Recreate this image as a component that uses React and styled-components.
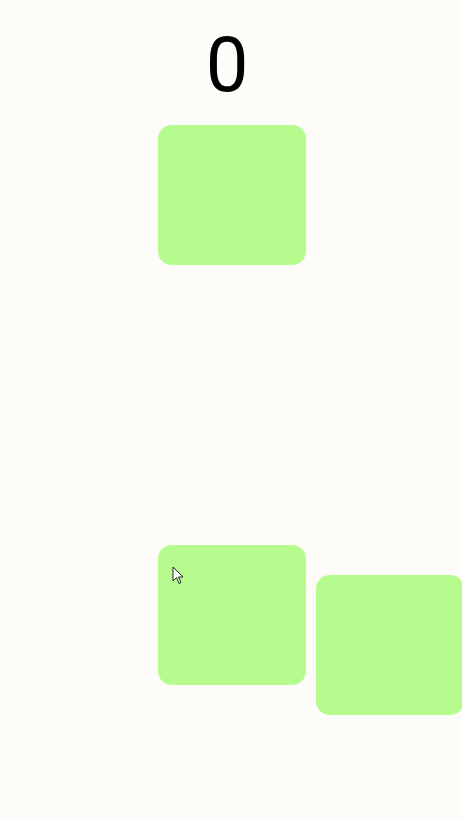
import React from "react";
import styled, { createGlobalStyle } from "styled-components";

const GlobalStyle = createGlobalStyle`
  html, body {
    margin: 0;
    padding: 0;
    background: #fdfcf8;
  }
  body {
    font-family: Roboto, "Liberation Sans", sans-serif;
    overflow: hidden;
  }
`;

const Page = styled.div`
  box-sizing: border-box;
  width: 462px;
  height: 820px;
  padding-left: 2px;
  display: flex;
  flex-direction: column;
  align-items: center;
  overflow: hidden;
`;

const Counter = styled.div`
  margin-top: 22px;
  margin-right: 10px;
  font-size: 76px;
  line-height: 86px;
  color: #000;
`;

const Box = styled.div`
  width: 148px;
  height: 140px;
  border-radius: 14px;
  background: #b5fb8d;
  flex-shrink: 0;
  margin-top: ${(p) => p.$offset || 0}px;
`;

const Row = styled.div`
  display: grid;
  grid-template-columns: 156px 148px 156px;
  width: 460px;
  margin-top: 280px;
`;

const Side = styled.div`
  padding-left: 10px;
  display: flex;
`;

const Cursor = styled.svg`
  position: absolute;
  left: 172px;
  top: 566px;
`;

export default function App() {
  return (
    <>
      <GlobalStyle />
      <Page>
        <Counter>0</Counter>
        <Box $offset={17} />
        <Row>
          <div />
          <Box />
          <Side>
            <Box $offset={30} />
          </Side>
        </Row>
      </Page>
      <Cursor width="13" height="19" viewBox="0 0 13 19">
        <path
          d="M1 1 L1 15 L4.5 11.5 L7 17.5 L9 16.5 L6.5 11 L11 11 Z"
          fill="#fff"
          stroke="#222"
          strokeWidth="1"
          strokeLinejoin="round"
        />
      </Cursor>
    </>
  );
}
